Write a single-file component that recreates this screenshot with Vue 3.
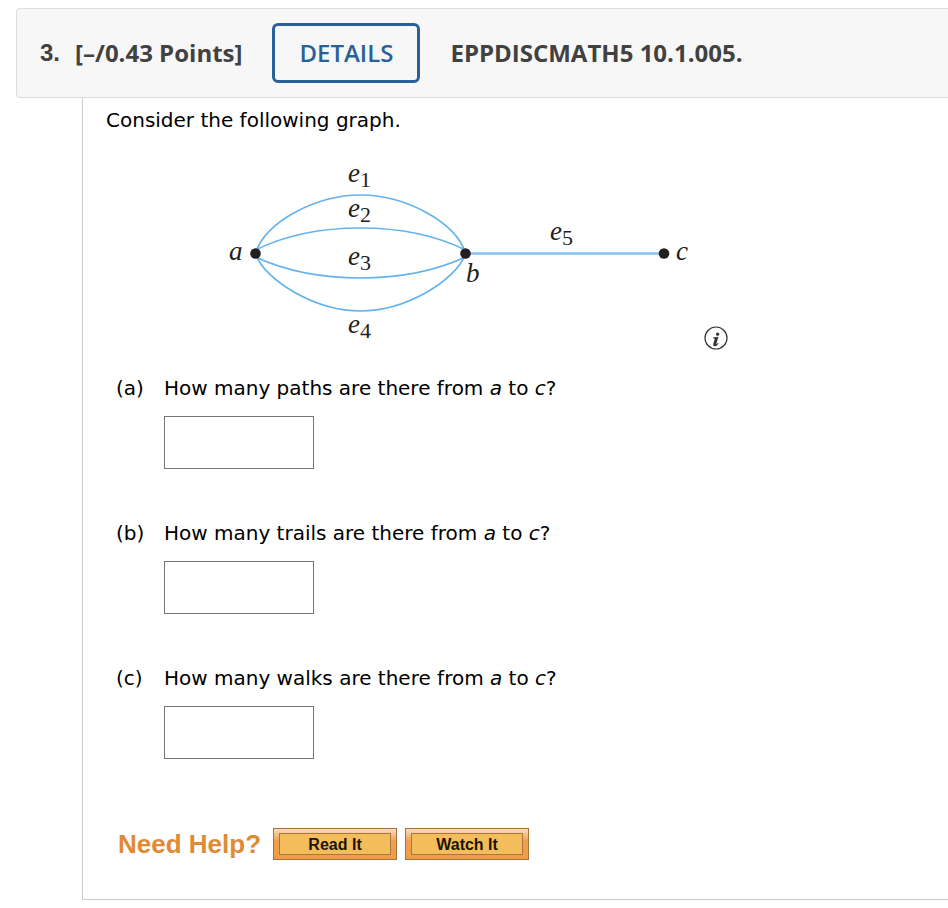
<script setup>
import { ref } from 'vue'

const questions = ref([
  { id: 'a', noun: 'paths', answer: '' },
  { id: 'b', noun: 'trails', answer: '' },
  { id: 'c', noun: 'walks', answer: '' },
])

const edgeLabels = [
  { n: 1, x: 348, y: 182 },
  { n: 2, x: 348, y: 217 },
  { n: 3, x: 348, y: 265 },
  { n: 4, x: 348, y: 333 },
  { n: 5, x: 550, y: 240 },
]

const vertices = [
  { name: 'a', cx: 255.5, x: 229, y: 260 },
  { name: 'b', cx: 465.5, x: 466, y: 282 },
  { name: 'c', cx: 664, x: 676, y: 260 },
]
</script>

<template>
  <main class="page">
    <header class="bar">
      <span class="number">3.</span>
      <span class="points">[–/0.43 Points]</span>
      <button type="button" class="details">DETAILS</button>
      <span class="code">EPPDISCMATH5 10.1.005.</span>
    </header>

    <section class="body">
      <p class="intro">Consider the following graph.</p>

      <div class="figure">
        <svg class="graph" width="480" height="204" viewBox="220 146 480 204" role="img" aria-label="Graph with vertices a, b and c">
          <g fill="none" stroke="#64b2ec" stroke-width="1.7">
            <path d="M255.500 253C266 221 317 195 360.500 195S455 221 465.500 253" />
            <path d="M255.500 250C286 235 320 228 360.500 228S435 235 465.500 250" />
            <path d="M255.500 257C286 271 320 278 360.500 278S435 271 465.500 257" />
            <path d="M255.500 254C266 282 317 311 360.500 311S455 282 465.500 254" />
            <path d="M465 253.500H664" stroke="#86c3f2" stroke-width="2.400" />
          </g>
          <g v-for="v in vertices" :key="v.name" fill="#231f20">
            <circle :cx="v.cx" cy="253.500" r="5.300" />
            <text class="label" :x="v.x" :y="v.y">{{ v.name }}</text>
          </g>
          <g v-for="e in edgeLabels" :key="e.n" fill="#231f20">
            <text class="label" :x="e.x" :y="e.y">e</text>
            <text class="sub" :x="e.x + 12" :y="e.y + 5">{{ e.n }}</text>
          </g>
        </svg>
        <button type="button" class="info" aria-label="Image description">
          <svg width="24" height="24" viewBox="0 0 24 24">
            <circle cx="12" cy="12" r="11" fill="#fff" stroke="#333" stroke-width="1.200" />
            <circle cx="13.600" cy="8.200" r="1.600" fill="#333" />
            <path d="M9 11.500L14.400 10.700L12.400 17.600Q12.200 18.500 12.900 18.100L14.100 16.700L14.700 17.200Q12.900 20.200 10.700 20.200Q8.700 20.100 9.300 17.900L10.600 13.200Q10.800 12.200 9 12.300Z" fill="#333" />
          </svg>
        </button>
      </div>

      <ol class="questions">
        <li v-for="q in questions" :key="q.id" class="question">
          <span class="letter">({{ q.id }})</span>
          <div class="part">
            <label :for="'answer-' + q.id">How many {{ q.noun }} are there from <i>a</i> to <i>c</i>?</label>
            <input :id="'answer-' + q.id" v-model="q.answer" class="answer" type="text" autocomplete="off" />
          </div>
        </li>
      </ol>

      <div class="help">
        <span class="need">Need Help?</span>
        <button type="button" class="help-button"><span class="face">Read It</span></button>
        <button type="button" class="help-button"><span class="face">Watch It</span></button>
      </div>
    </section>
  </main>
</template>

<style>
body {
  margin: 0;
  background: #fff;
}
</style>

<style scoped>
.page {
  padding: 8px 0 8px 16px;
  color: #000;
  font: 20px/24px Verdana, "DejaVu Sans", sans-serif;
}

.bar {
  display: flex;
  align-items: center;
  padding: 14px 0 14px 23px;
  border: 1px solid #ddd;
  border-right: 0;
  border-radius: 4px 0 0 4px;
  background: #f7f7f7;
  color: #414141;
  font: 700 24px/32px "Open Sans", sans-serif;
}

.number {
  margin-right: 15px;
  font-family: "Liberation Sans", Arial, sans-serif;
}

.details {
  margin: 0 30px;
  padding: 11px 24px;
  border: 3px solid #296097;
  border-radius: 6px;
  background: #f7f7f7;
  color: #296097;
  font: 600 24px/32px "Open Sans", sans-serif;
}

.body {
  margin-left: 66px;
  padding: 10px 24px 39px 23px;
  border: solid #ccc;
  border-width: 0 0 1px 1px;
}

.intro {
  margin: 0;
}

.figure {
  display: flex;
  align-items: flex-end;
  gap: 4px;
  margin: 14px 0 0 114px;
}

.graph {
  display: block;
}

.label {
  font: italic 27px "Liberation Serif", serif;
}

.sub {
  font: 22px "Liberation Serif", serif;
}

.info {
  display: flex;
  padding: 0;
  border: 0;
  background: none;
}

.questions {
  display: grid;
  gap: 40px;
  margin: 26px 0 0;
  padding: 0 0 0 10px;
  list-style: none;
}

.question {
  display: grid;
  grid-template-columns: 48px 1fr;
}

.part {
  display: grid;
  gap: 16px;
  justify-items: start;
  padding-bottom: 12px;
}

.answer {
  box-sizing: border-box;
  width: 150px;
  height: 53px;
  padding: 4px 8px;
  border: 1px solid #767676;
  background: #fff;
  font: inherit;
}

.help {
  display: flex;
  align-items: center;
  gap: 8px;
  margin-top: 57px;
  padding-left: 12px;
}

.need {
  margin-right: 4px;
  color: #df8a35;
  font: 700 26px/32px "Liberation Sans", Arial, sans-serif;
}

.help-button {
  display: flex;
  width: 124px;
  height: 32px;
  padding: 4px 5px;
  border: 1px solid #a9713a;
  background: linear-gradient(#f9dcc4, #f0a050 40%, #ee9c48);
}

.face {
  flex: 1;
  border: 1px solid #a9773c;
  background: #f4bd5c;
  color: #1c1404;
  font: 700 16px/21px "Liberation Sans", Arial, sans-serif;
}
</style>
